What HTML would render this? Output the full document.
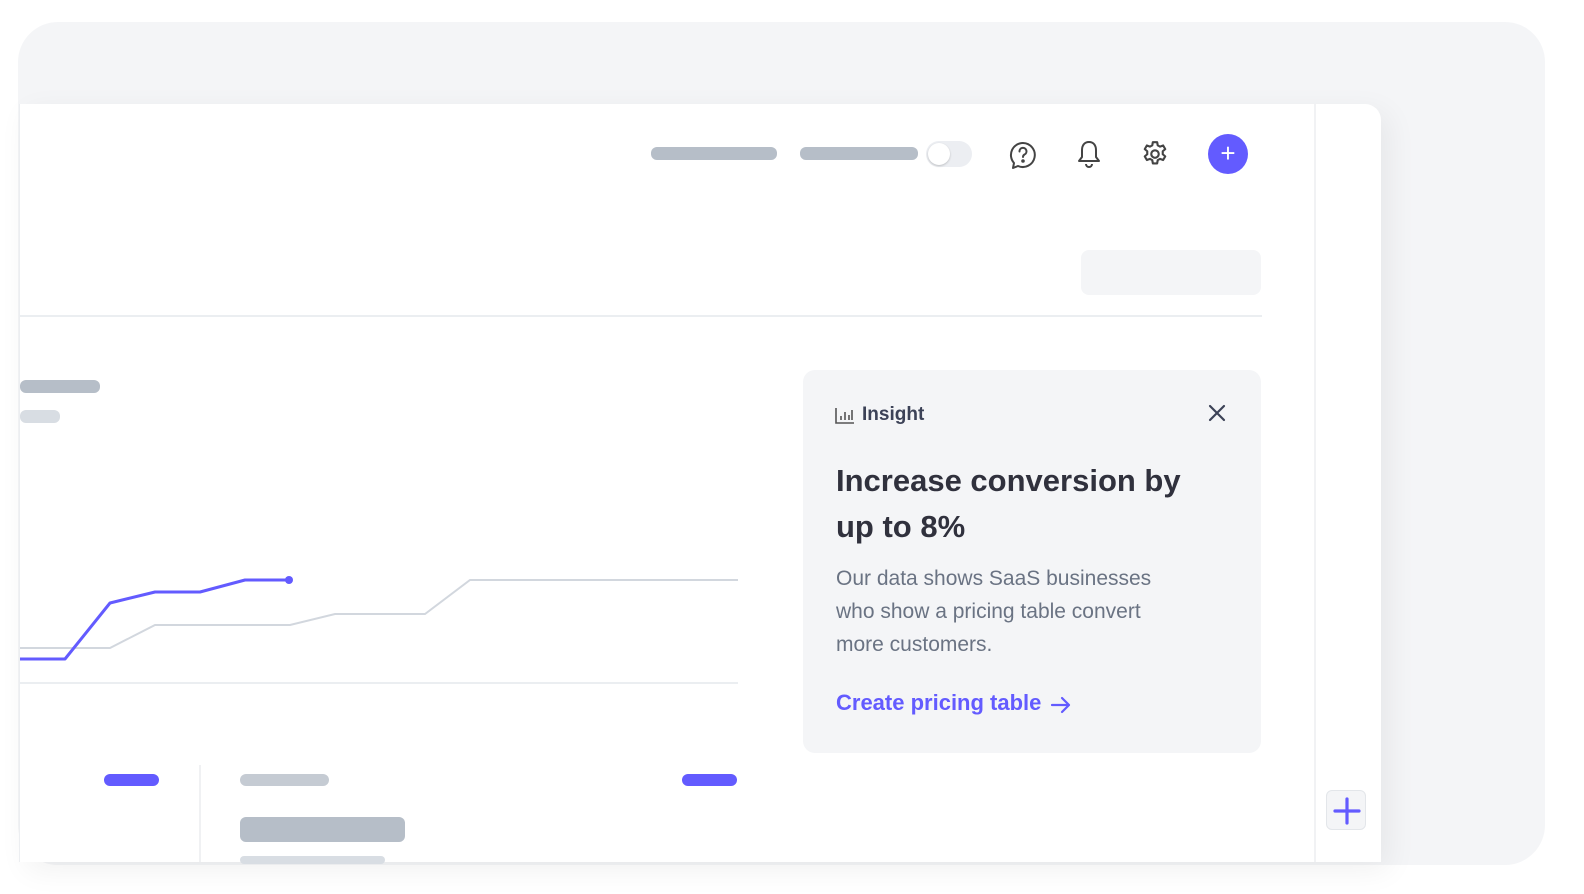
<!DOCTYPE html>
<html><head><meta charset="utf-8"><style>
body{margin:0;width:1584px;height:894px;background:#fff;position:relative;overflow:hidden;font-family:"Liberation Sans",sans-serif}
.outer{position:absolute;left:18px;top:22px;width:1527px;height:843px;background:#f4f5f7;border-radius:40px}
.panel{position:absolute;left:19px;top:104px;width:1361px;height:758px;background:#fff;border-top-right-radius:16px;border-left:1px solid #eceef1;box-shadow:8px 8px 30px rgba(0,0,0,.06)}
.abs{position:absolute}
.bar{position:absolute;border-radius:6px}
</style></head><body>
<div class="outer"></div>
<div class="panel"></div>
<div class="abs" style="left:1314px;top:104px;width:2px;height:758px;background:#f1f2f4"></div>
<div class="bar" style="left:651px;top:147px;width:126px;height:13px;background:#b6bec8"></div>
<div class="bar" style="left:800px;top:147px;width:118px;height:13px;background:#b6bec8"></div>
<div class="abs" style="left:926px;top:141px;width:46px;height:26px;border-radius:13px;background:#eceef2"></div>
<div class="abs" style="left:928px;top:143px;width:22px;height:22px;border-radius:11px;background:#fff;box-shadow:0 1px 2px rgba(0,0,0,.2)"></div>
<svg class="abs" style="left:1007px;top:139px" width="32" height="32" viewBox="0 0 32 32" fill="none" stroke="#444" stroke-width="2" stroke-linecap="round" stroke-linejoin="round"><path d="M16 4a12 12 0 1 1-5 23l-5 2 1-5A12 12 0 0 1 16 4z"/><path d="M12.5 12.5a3.5 3.5 0 1 1 5 3c-1 .6-1.5 1.2-1.5 2.5"/><circle cx="16" cy="22" r=".8" fill="#444"/></svg>
<svg class="abs" style="left:1074px;top:138px" width="30" height="32" viewBox="0 0 30 32" fill="none" stroke="#444" stroke-width="2" stroke-linejoin="round"><path d="M15 4c-5 0-7 4-7 8v7l-3 4h20l-3-4v-7c0-4-2-8-7-8z"/><path d="M12 26a3 3 0 0 0 6 0"/></svg>
<svg class="abs" style="left:1140px;top:139px" width="30" height="30" viewBox="0 0 24 24" fill="none" stroke="#444" stroke-width="1.7" stroke-linejoin="round"><circle cx="12" cy="12" r="3"/><path d="M10.3 2.5h3.4l.5 2.6 1.8 1 2.5-.9 1.7 2.9-2 1.7v2.4l2 1.7-1.7 2.9-2.5-.9-1.8 1-.5 2.6h-3.4l-.5-2.6-1.8-1-2.5.9-1.7-2.9 2-1.7v-2.4l-2-1.7 1.7-2.9 2.5.9 1.8-1z"/></svg>
<div class="abs" style="left:1208px;top:134px;width:40px;height:40px;border-radius:20px;background:#635bff;color:#fff;font-size:26px;line-height:38px;text-align:center">+</div>
<div class="abs" style="left:1081px;top:250px;width:180px;height:45px;border-radius:8px;background:#f4f5f7"></div>
<div class="abs" style="left:20px;top:315px;width:1242px;height:2px;background:#ebeef1"></div>
<div class="bar" style="left:20px;top:380px;width:80px;height:13px;background:#b6bec8"></div>
<div class="bar" style="left:20px;top:410px;width:40px;height:13px;background:#d8dde3"></div>
<svg class="abs" style="left:0;top:560px" width="740" height="130"><polyline points="20,88 110,88 155,65 290,65 335,54 425,54 470,20 738,20" fill="none" stroke="#d2d7de" stroke-width="2"/><polyline points="20,99 65,99 110,43 155,32 200,32 245,20 288,20" fill="none" stroke="#635bff" stroke-width="3" stroke-linejoin="round"/><circle cx="289" cy="20" r="4" fill="#635bff"/><line x1="20" y1="123" x2="738" y2="123" stroke="#ebeef1" stroke-width="2"/></svg>
<div class="bar" style="left:104px;top:774px;width:55px;height:12px;background:#635bff"></div>
<div class="bar" style="left:682px;top:774px;width:55px;height:12px;background:#635bff"></div>
<div class="abs" style="left:199px;top:765px;width:2px;height:97px;background:#f0f1f3"></div>
<div class="bar" style="left:240px;top:774px;width:89px;height:12px;background:#c5cbd3"></div>
<div class="bar" style="left:240px;top:817px;width:165px;height:25px;background:#b6bec8"></div>
<div class="bar" style="left:240px;top:856px;width:145px;height:8px;background:#d8dde3"></div>
<div class="abs" style="left:803px;top:370px;width:458px;height:383px;border-radius:12px;background:#f4f5f7"></div>
<svg class="abs" style="left:835px;top:407px" width="20" height="18" viewBox="0 0 20 18" fill="none" stroke="#555" stroke-width="1.6"><path d="M1 1v15h18"/><path d="M6 13v-4M10 13V5M14 13V8M17 13V3"/></svg>
<div class="abs" style="left:862px;top:404px;font-size:19px;font-weight:bold;color:#3c4257">Insight</div>
<svg class="abs" style="left:1208px;top:404px" width="18" height="18" viewBox="0 0 18 18" stroke="#3c4257" stroke-width="2.2" stroke-linecap="round"><path d="M2 2l14 14M16 2L2 16"/></svg>
<div class="abs" style="left:836px;top:458px;font-size:31px;font-weight:bold;color:#30313d;line-height:46px;width:375px">Increase conversion by up to 8%</div>
<div class="abs" style="left:836px;top:562px;font-size:21px;color:#6a7383;line-height:33px;width:358px">Our data shows SaaS businesses who show a pricing table convert more customers.</div>
<div class="abs" style="left:836px;top:690px;font-size:22px;font-weight:bold;color:#635bff">Create pricing table</div>
<svg class="abs" style="left:1049px;top:694px" width="24" height="22" viewBox="0 0 24 22" fill="none" stroke="#635bff" stroke-width="2.2" stroke-linecap="round" stroke-linejoin="round"><path d="M3 11h17M13 4l7 7-7 7"/></svg>
<div class="abs" style="left:1326px;top:790px;width:40px;height:40px;border-radius:6px;background:#f4f5f7;border:1px solid #e3e6ea;box-sizing:border-box"></div>
<svg class="abs" style="left:1332px;top:796px" width="30" height="30" stroke="#635bff" stroke-width="3.2" stroke-linecap="round"><path d="M15 3v24M3 15h24"/></svg>
</body></html>
